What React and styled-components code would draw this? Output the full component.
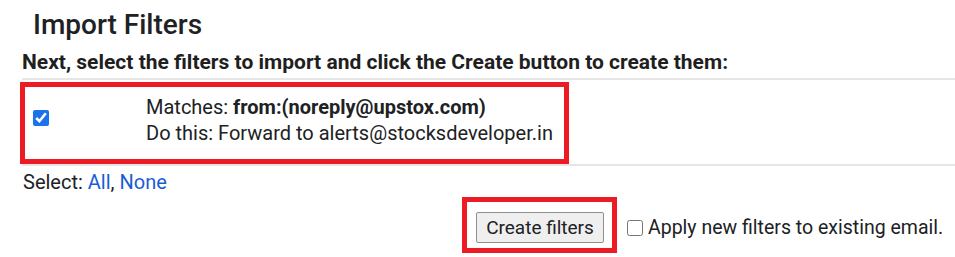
import React from 'react'
import styled, { createGlobalStyle } from 'styled-components';

const GlobalStyle = createGlobalStyle`
    body{
        margin: 0;
        background: #fff;
        font-family: Roboto, "Liberation Sans", Arial, sans-serif;
        color: #202124;
    }
`;

function App() {
    return (
        <PageStyled>
            <GlobalStyle />
            <Title>Import Filters</Title>
            <Intro>Next, select the filters to import and click the Create button to create them:</Intro>
            <FilterTable>
                <Highlight>
                    <FilterRow>
                        <CheckCell>
                            <Check type="checkbox" defaultChecked />
                        </CheckCell>
                        <FilterText>
                            <div>Matches: <b>from:(noreply@upstox.com)</b></div>
                            <div>Do this: Forward to alerts@stocksdeveloper.in</div>
                        </FilterText>
                    </FilterRow>
                </Highlight>
            </FilterTable>
            <SelectLine>
                Select: <a href="#all">All</a>, <a href="#none">None</a>
            </SelectLine>
            <Actions>
                <Highlight $pad="10px 8px 5px 9px">
                    <CreateButton>Create filters</CreateButton>
                </Highlight>
                <ApplyLabel>
                    <Check type="checkbox" />
                    Apply new filters to existing email.
                </ApplyLabel>
            </Actions>
        </PageStyled>
    )
}

const PageStyled = styled.div`
    width: 955px;
    height: 257px;
    padding: 0 0 0 22px;
    box-sizing: border-box;
    overflow: hidden;
`;

const Title = styled.h1`
    margin: 0;
    padding: 8px 0 0 11px;
    font-size: 28px;
    font-weight: 500;
    line-height: 34px;
`;

const Intro = styled.div`
    margin-top: 7px;
    font-size: 21px;
    font-weight: 700;
    line-height: 26px;
    color: #1f1f1f;
`;

const FilterTable = styled.div`
    margin-top: 3px;
    border-top: 2px solid #e6e6e6;
    border-bottom: 2px solid #e6e6e6;
    padding-top: 2px;
`;

const Highlight = styled.div`
    width: fit-content;
    border: 5px solid #ed1c24;
    padding: ${p => p.$pad || '0'};
    margin-left: ${p => p.$pad ? '0' : '-2px'};
`;

const FilterRow = styled.div`
    display: flex;
    align-items: flex-start;
    width: 539px;
    height: 72px;
`;

const CheckCell = styled.div`
    width: 121px;
    padding: 23px 0 0 8px;
    box-sizing: border-box;
    display: flex;
`;

const Check = styled.input`
    width: 16px;
    height: 16px;
    margin: 0;
    accent-color: #1a73e8;
`;

const FilterText = styled.div`
    padding-top: 7px;
    font-size: 20px;
    line-height: 26px;
    b{
        font-weight: 700;
    }
`;

const SelectLine = styled.div`
    margin: 4px 0 0 1px;
    font-size: 20px;
    line-height: 24px;
    a{
        color: #1a5bd6;
        text-decoration: none;
    }
`;

const Actions = styled.div`
    display: flex;
    align-items: center;
    margin: 3px 0 0 440px;
`;

const CreateButton = styled.button`
    display: block;
    width: 128px;
    height: 31px;
    font-family: Roboto, "Liberation Sans", Arial, sans-serif;
    font-size: 19px;
    color: #202124;
    background: #efefef;
    border: 1px solid #8f8f8f;
    border-radius: 2px;
    padding: 0;
`;

const ApplyLabel = styled.label`
    display: flex;
    align-items: center;
    gap: 5px;
    margin: 5px 0 0 10px;
    font-size: 19.5px;
    ${Check}{
        accent-color: #767676;
    }
`;

export default App;
